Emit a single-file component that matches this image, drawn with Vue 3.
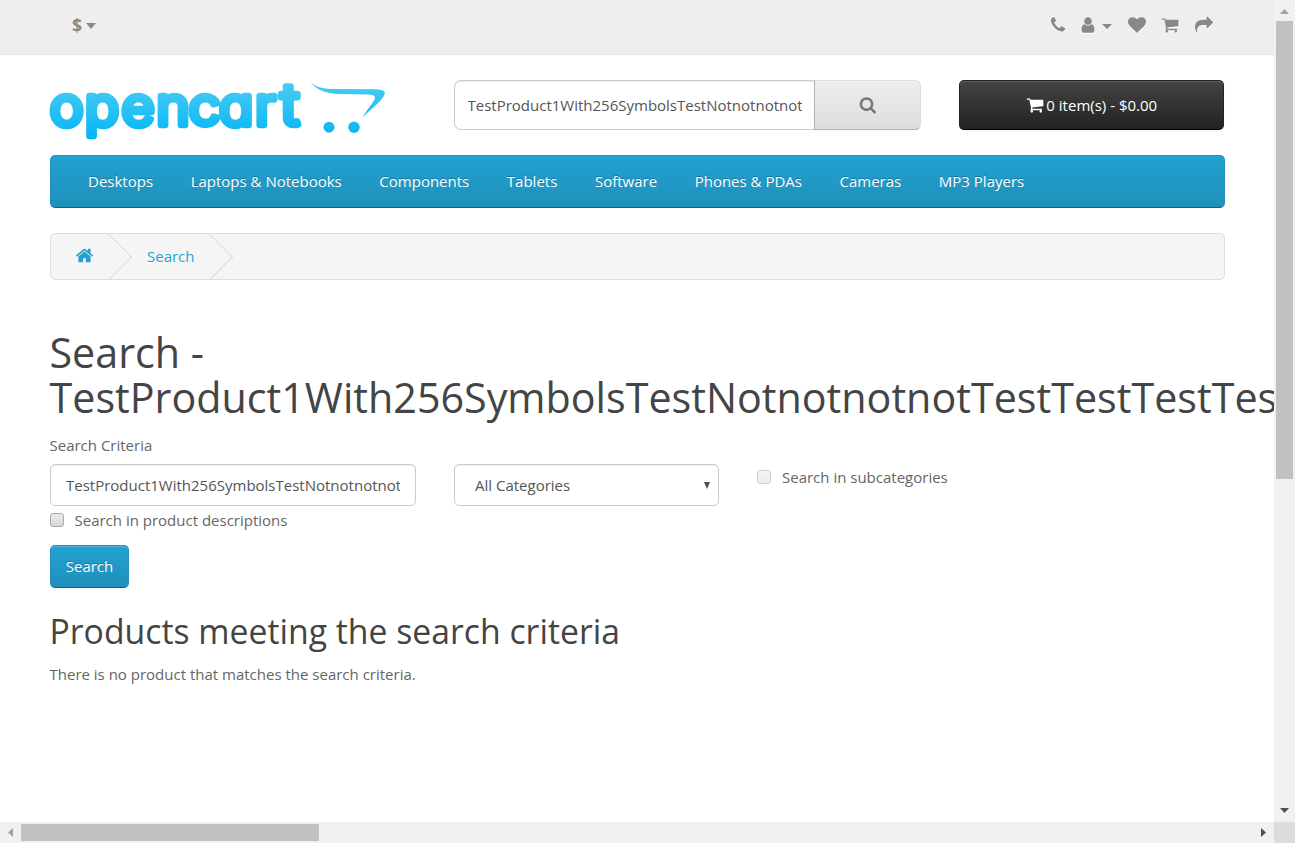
<script setup>
const icons = {
  phone: 'M1600 1240q0 27-10 70.5t-21 68.5q-21 50-122 106-94 51-186 51-27 0-53-3.5t-57.5-12.5-47-14.5-55.5-20.5-49-18q-98-35-175-83-127-79-264-216t-216-264q-48-77-83-175-3-9-18-49t-20.5-55.5-14.5-47-12.5-57.5-3.5-53q0-92 51-186 56-101 106-122 25-11 68.5-21t70.5-10q14 0 21 3 18 6 53 76 11 19 30 54t35 63.5 31 53.5q3 4 17.5 25t21.5 35.5 7 28.5q0 20-28.5 50t-62 55-62 53-28.5 46q0 9 5 22.5t8.5 20.5 14 24 11.5 19q76 137 174 235t235 174q2 1 19 11.5t24 14 20.5 8.5 22.5 5q18 0 46-28.5t53-62 55-62 50-28.5q14 0 28.5 7t35.5 21.5 25 17.5q25 15 53.5 31t63.5 35 54 30q70 35 76 53 3 7 3 21z',
  user: 'M1536 1399q0 109-62.5 187t-150.5 78h-854q-88 0-150.5-78t-62.5-187q0-85 8.5-160.5t31.5-152 58.5-131 94-89 134.5-34.5q131 128 313 128t313-128q76 0 134.5 34.5t94 89 58.5 131 31.5 152 8.5 160.5zm-256-887q0 159-112.5 271.5t-271.5 112.5-271.5-112.5-112.5-271.5 112.5-271.5 271.5-112.5 271.5 112.5 112.5 271.5z',
  heart: 'M896 1664q-26 0-44-18l-624-602q-10-8-27.5-26t-55.5-65.5-68-97.5-53.5-121-23.5-138q0-220 127-344t351-124q62 0 126.5 21.5t120 58 95.5 68.5 76 68q36-36 76-68t95.5-68.5 120-58 126.5-21.5q224 0 351 124t127 344q0 221-229 450l-623 600q-18 18-44 18z',
  cart: 'M704 1536q0 52-38 90t-90 38-90-38-38-90 38-90 90-38 90 38 38 90zm896 0q0 52-38 90t-90 38-90-38-38-90 38-90 90-38 90 38 38 90zm128-1088v512q0 24-16.5 42.5t-40.5 21.5l-1044 122q13 60 13 70 0 16-24 64h920q26 0 45 19t19 45-19 45-45 19h-1024q-26 0-45-19t-19-45q0-11 8-31.5t16-36 21.5-40 15.5-29.5l-177-823h-204q-26 0-45-19t-19-45 19-45 45-19h256q16 0 28.5 6.5t19.5 15.5 13 24.5 8 26 5.5 29.5 4.5 26h1201q26 0 45 19t19 45z',
  share: 'M1792 640q0 26-19 45l-512 512q-19 19-45 19t-45-19-19-45v-256h-224q-98 0-175.5 6t-154 21.5-133 42.5-105.5 69.5-80 101-48.5 138.5-17.5 181q0 55 5 123 0 6 2.5 23.5t2.5 26.5q0 15-8.5 25t-23.5 10q-16 0-28-17-7-9-13-22t-13.5-30-10.5-24q-127-285-127-451 0-199 53-333 162-403 875-403h224v-256q0-26 19-45t45-19 45 19l512 512q19 19 19 45z',
  search: 'M1216 832q0-185-131.5-316.5t-316.5-131.5-316.5 131.5-131.5 316.5 131.5 316.5 316.5 131.5 316.5-131.5 131.5-316.5zm512 832q0 52-38 90t-90 38q-54 0-90-38l-343-342q-179 124-399 124-143 0-273.5-55.5t-225-150-150-225-55.5-273.5 55.5-273.5 150-225 225-150 273.5-55.5 273.5 55.5 225 150 150 225 55.5 273.5q0 220-124 399l343 343q37 37 37 90z',
  home: 'M1472 992v480q0 26-19 45t-45 19h-384v-384h-256v384h-384q-26 0-45-19t-19-45v-480q0-1 .5-3t.5-3l575-474 575 474q1 2 1 6zm223-69l-62 74q-8 9-21 11h-3q-13 0-21-7l-692-577-692 577q-12 8-24 7-13-2-21-11l-62-74q-8-10-7-23.5t11-21.5l719-599q32-26 76-26t76 26l244 204v-195q0-14 9-23t23-9h192q14 0 23 9t9 23v408l219 182q10 8 11 21.5t-7 23.5z',
}
const menu = ['Desktops', 'Laptops & Notebooks', 'Components', 'Tablets', 'Software', 'Phones & PDAs', 'Cameras', 'MP3 Players']
const query = 'TestProduct1With256SymbolsTestNotnotnotnot'
</script>

<template>
  <div class="window">
    <div class="page">
      <nav class="top">
        <div class="currency"><strong>$</strong><i class="caret"></i></div>
        <div class="links">
          <svg class="ico" viewBox="0 0 1792 1792"><path :d="icons.phone" /></svg>
          <svg class="ico user" viewBox="0 0 1792 1792"><path :d="icons.user" /></svg>
          <i class="caret"></i>
          <svg class="ico heart" viewBox="0 0 1792 1792"><path :d="icons.heart" /></svg>
          <svg class="ico basket" viewBox="0 0 1792 1792"><path :d="icons.cart" /></svg>
          <svg class="ico share" viewBox="0 0 1792 1792"><path :d="icons.share" /></svg>
        </div>
      </nav>

      <div class="container">
        <header>
          <svg class="logo" width="340" height="66" viewBox="0 0 340 66">
            <defs>
              <linearGradient id="brand" gradientUnits="userSpaceOnUse" x1="0" y1="2" x2="0" y2="60">
                <stop offset="0" stop-color="#4accf2" />
                <stop offset="1" stop-color="#03b5f5" />
              </linearGradient>
            </defs>
            <text class="wordmark" transform="scale(1.08 1)" x="0 32.4 66.4 98.6 128.6 156.8 190 213.600" y="45">opencar<tspan class="tall">t</tspan></text>
            <g fill="url(#brand)">
              <path d="M260 1C265 7.500 274 9 285 9L326 9.200C332 9.500 336 10.500 334.500 14.500C332 21.500 320 29.500 313 37C315 31.500 325 21.500 325 17.500C325 15 321 14.500 316 14.500L290 14C275 13.500 265 9.500 260 1Z" />
              <circle cx="279" cy="47.200" r="5.500" />
              <circle cx="304" cy="47.200" r="5.700" />
            </g>
          </svg>
          <div class="find">
            <input type="text" :value="query" />
            <button type="button"><svg class="ico" viewBox="0 0 1792 1792"><path :d="icons.search" /></svg></button>
          </div>
          <button class="cart" type="button">
            <svg class="ico" viewBox="0 0 1792 1792"><path :d="icons.cart" /></svg><span>0 item(s) - $0.00</span>
          </button>
        </header>

        <nav class="menu"><a v-for="m in menu" :key="m">{{ m }}</a></nav>

        <div class="crumbs">
          <a class="crumb first"><svg class="ico" viewBox="0 0 1792 1792"><path :d="icons.home" /></svg></a>
          <a class="crumb second">Search</a>
        </div>

        <h1>Search - TestProduct1With256SymbolsTestNotnotnotnotTestTestTestTes</h1>
        <label class="criteria">Search Criteria</label>
        <div class="row">
          <input class="control" type="text" :value="query" />
          <div class="control select"><span>All Categories</span><i></i></div>
          <label class="check sub"><i class="box off"></i>Search in subcategories</label>
        </div>
        <label class="check desc"><i class="box"></i>Search in product descriptions</label>
        <button class="primary" type="button">Search</button>
        <h2>Products meeting the search criteria</h2>
        <p>There is no product that matches the search criteria.</p>
      </div>
    </div>

    <div class="vbar">
      <svg width="21" height="21"><path d="M6 14h9l-4.500-5z" fill="#a3a3a3" /></svg>
      <div class="vthumb"></div>
      <svg class="end" width="21" height="21"><path d="M6 7h9l-4.500 5z" fill="#505050" /></svg>
    </div>
    <div class="hbar">
      <svg width="21" height="21"><path d="M13 6v9l-5-4.500z" fill="#a3a3a3" /></svg>
      <div class="hthumb"></div>
      <svg class="end" width="21" height="21"><path d="M8 6v9l5-4.500z" fill="#505050" /></svg>
    </div>
    <div class="corner"></div>
  </div>
</template>

<style>
html, body { margin: 0; overflow: hidden; }
</style>

<style scoped>
* { box-sizing: border-box; }
.window {
  width: 1295px; height: 843px; display: grid;
  grid-template-columns: 1274px 21px; grid-template-rows: 822px 21px;
  background: #fff; overflow: hidden;
  font: 400 15px/25px "Open Sans", sans-serif; color: #666;
}
.page { overflow: hidden; min-width: 0; }
input, button { font: inherit; margin: 0; }
.ico { width: 17.5px; height: 17.5px; fill: currentColor; display: block; flex: none; overflow: visible; }
.caret { border: 5px solid transparent; border-top-color: currentColor; border-bottom: 0; width: 0; height: 0; }

.top {
  height: 55px; background: #eee; border-bottom: 1px solid #e2e2e2; color: #888;
  display: flex; justify-content: space-between; padding: 0 61.5px 0 72px;
}
.currency, .links { display: flex; height: 49px; align-items: center; }
.currency strong { font-size: 17.5px; margin: 1px 4px 0 0; }
.currency .caret { margin-top: 2px; border-width: 6px 5.500px 0; }
.top .ico { filter: drop-shadow(0 1px 0 #fff); }
.links .ico { width: 18px; height: 18px; }
.links .user { margin-left: 12px; }
.links .caret { margin: 4px 0 0 4.500px; }
.links .heart { margin-left: 16px; }
.links .basket { margin-left: 15.500px; }
.links .share { margin-left: 15.500px; }

.container { width: 1175px; margin-left: 50px; }
header { display: flex; height: 100px; padding-top: 25px; }
.logo { display: block; flex: none; margin-right: 64px; overflow: visible; }
.wordmark {
  font: 300 52px Inter, sans-serif; font-feature-settings: "cv11" 1;
  fill: url(#brand); stroke: url(#brand); stroke-width: 6.500px; stroke-linejoin: round;
}
.tall { font-size: 57px; }
.find { display: flex; width: 467px; height: 50px; }
.find input {
  width: 360px; border: 1px solid #ccc; border-right: 0; border-radius: 7px 0 0 7px;
  padding: 0 12px 0 12.5px; color: #555; background: #fff; box-shadow: inset 0 1px 1px rgba(0,0,0,.075); outline: 0;
}
.find button {
  width: 107px; display: grid; place-items: center; color: #777; padding: 0;
  border: 1px solid; border-color: #ddd #ddd #b3b3b3 #b3b3b3; border-radius: 0 6px 6px 0;
  background: linear-gradient(#eee, #ddd); box-shadow: 0 1px 2px rgba(0,0,0,.05);
}
.cart {
  width: 265px; height: 50px; margin-left: 38px; display: flex; align-items: center; justify-content: center;
  gap: 2.500px; padding: 0; color: #fff; border: 1px solid; border-color: #222 #222 #000; border-radius: 5px;
  background: linear-gradient(#444, #222); box-shadow: inset 0 1px 0 rgba(255,255,255,.15), 0 1px 2px rgba(0,0,0,.05);
}
.cart .ico { width: 18px; height: 18px; }
.menu {
  display: flex; height: 53px; padding: 0 37px; gap: 37.600px; line-height: 51px; color: #fff;
  border: 1px solid; border-color: #1f90bb #1f90bb #145e7a; border-radius: 5px;
  background: linear-gradient(#23a1d1, #1f90bb); text-shadow: 0 -1px 0 rgba(0,0,0,.25);
}
.crumbs {
  display: flex; height: 47px; margin-top: 25px; border: 1px solid #ddd; border-radius: 5px;
  background: #f5f5f5; color: #23a1d1; overflow: hidden; line-height: 45px; text-shadow: 0 1px 0 #fff;
}
.crumb { position: relative; display: flex; align-items: center; }
.crumb::after {
  content: ""; position: absolute; right: 7px; top: 6px; width: 33px; height: 33px;
  border: 1px solid #ddd; border-left: 0; border-bottom: 0; transform: rotate(45deg);
}
.first { width: 81px; padding-left: 24px; }
.second { width: 101px; padding-left: 15px; }
.first .ico { width: 19px; height: 19px; margin-bottom: 2px; }

h1 { margin: 50px -10px 0 -0.5px; font-size: 41.25px; line-height: 45.400px; }
h1, h2 { font-family: "Open Sans", sans-serif; font-weight: 400; color: #444; }
.criteria { display: block; margin: 12px 0 0 -0.5px; }
.row { display: flex; margin-top: 6px; }
.control {
  width: 366px; height: 42px; border: 1px solid #ccc; border-radius: 5px; padding: 0 15px; color: #555;
  background: #fff; box-shadow: inset 0 1px 1px rgba(0,0,0,.075); outline: 0;
}
.select { width: 265px; margin-left: 38px; padding: 1px 8px 0 20px; display: flex; align-items: center; justify-content: space-between; }
.select i { border: 3.500px solid transparent; border-top: 7px solid #505050; border-bottom: 0; }
.check { display: flex; align-items: center; height: 25px; }
.sub { margin: 1px 0 0 38px; }
.box { width: 14px; height: 14px; margin-right: 10.500px; border: 1px solid #a9a9a9; border-radius: 3px; background: linear-gradient(#eaeaea, #d8d8d8); }
.off { opacity: .5; margin-right: 11px; }
.desc { margin-top: 2px; }
.primary {
  display: block; width: 79px; height: 43px; margin-top: 12px; padding: 0; color: #fff; border: 1px solid;
  border-color: #1f90bb #1f90bb #145e7a; border-radius: 5px; background: linear-gradient(#23a1d1, #1f90bb);
  text-shadow: 0 -1px 0 rgba(0,0,0,.25); box-shadow: inset 0 1px 0 rgba(255,255,255,.2), 0 1px 2px rgba(0,0,0,.05);
}
h2 { margin: 25px 0 0 -0.5px; font-size: 33.75px; line-height: 37px; }
p { margin: 12px 0 0 -0.5px; }

.vbar { background: #f1f1f1; display: flex; flex-direction: column; }
.vthumb { width: 17px; height: 458px; margin-left: 2px; background: #c1c1c1; }
.vbar svg, .hbar svg { display: block; flex: none; }
.vbar .end { margin-top: auto; }
.hbar { background: #f1f1f1; display: flex; }
.hthumb { width: 298px; height: 17px; margin-top: 2px; background: #c1c1c1; }
.hbar .end { margin-left: auto; }
.corner { background: #dcdcdc; }
</style>
